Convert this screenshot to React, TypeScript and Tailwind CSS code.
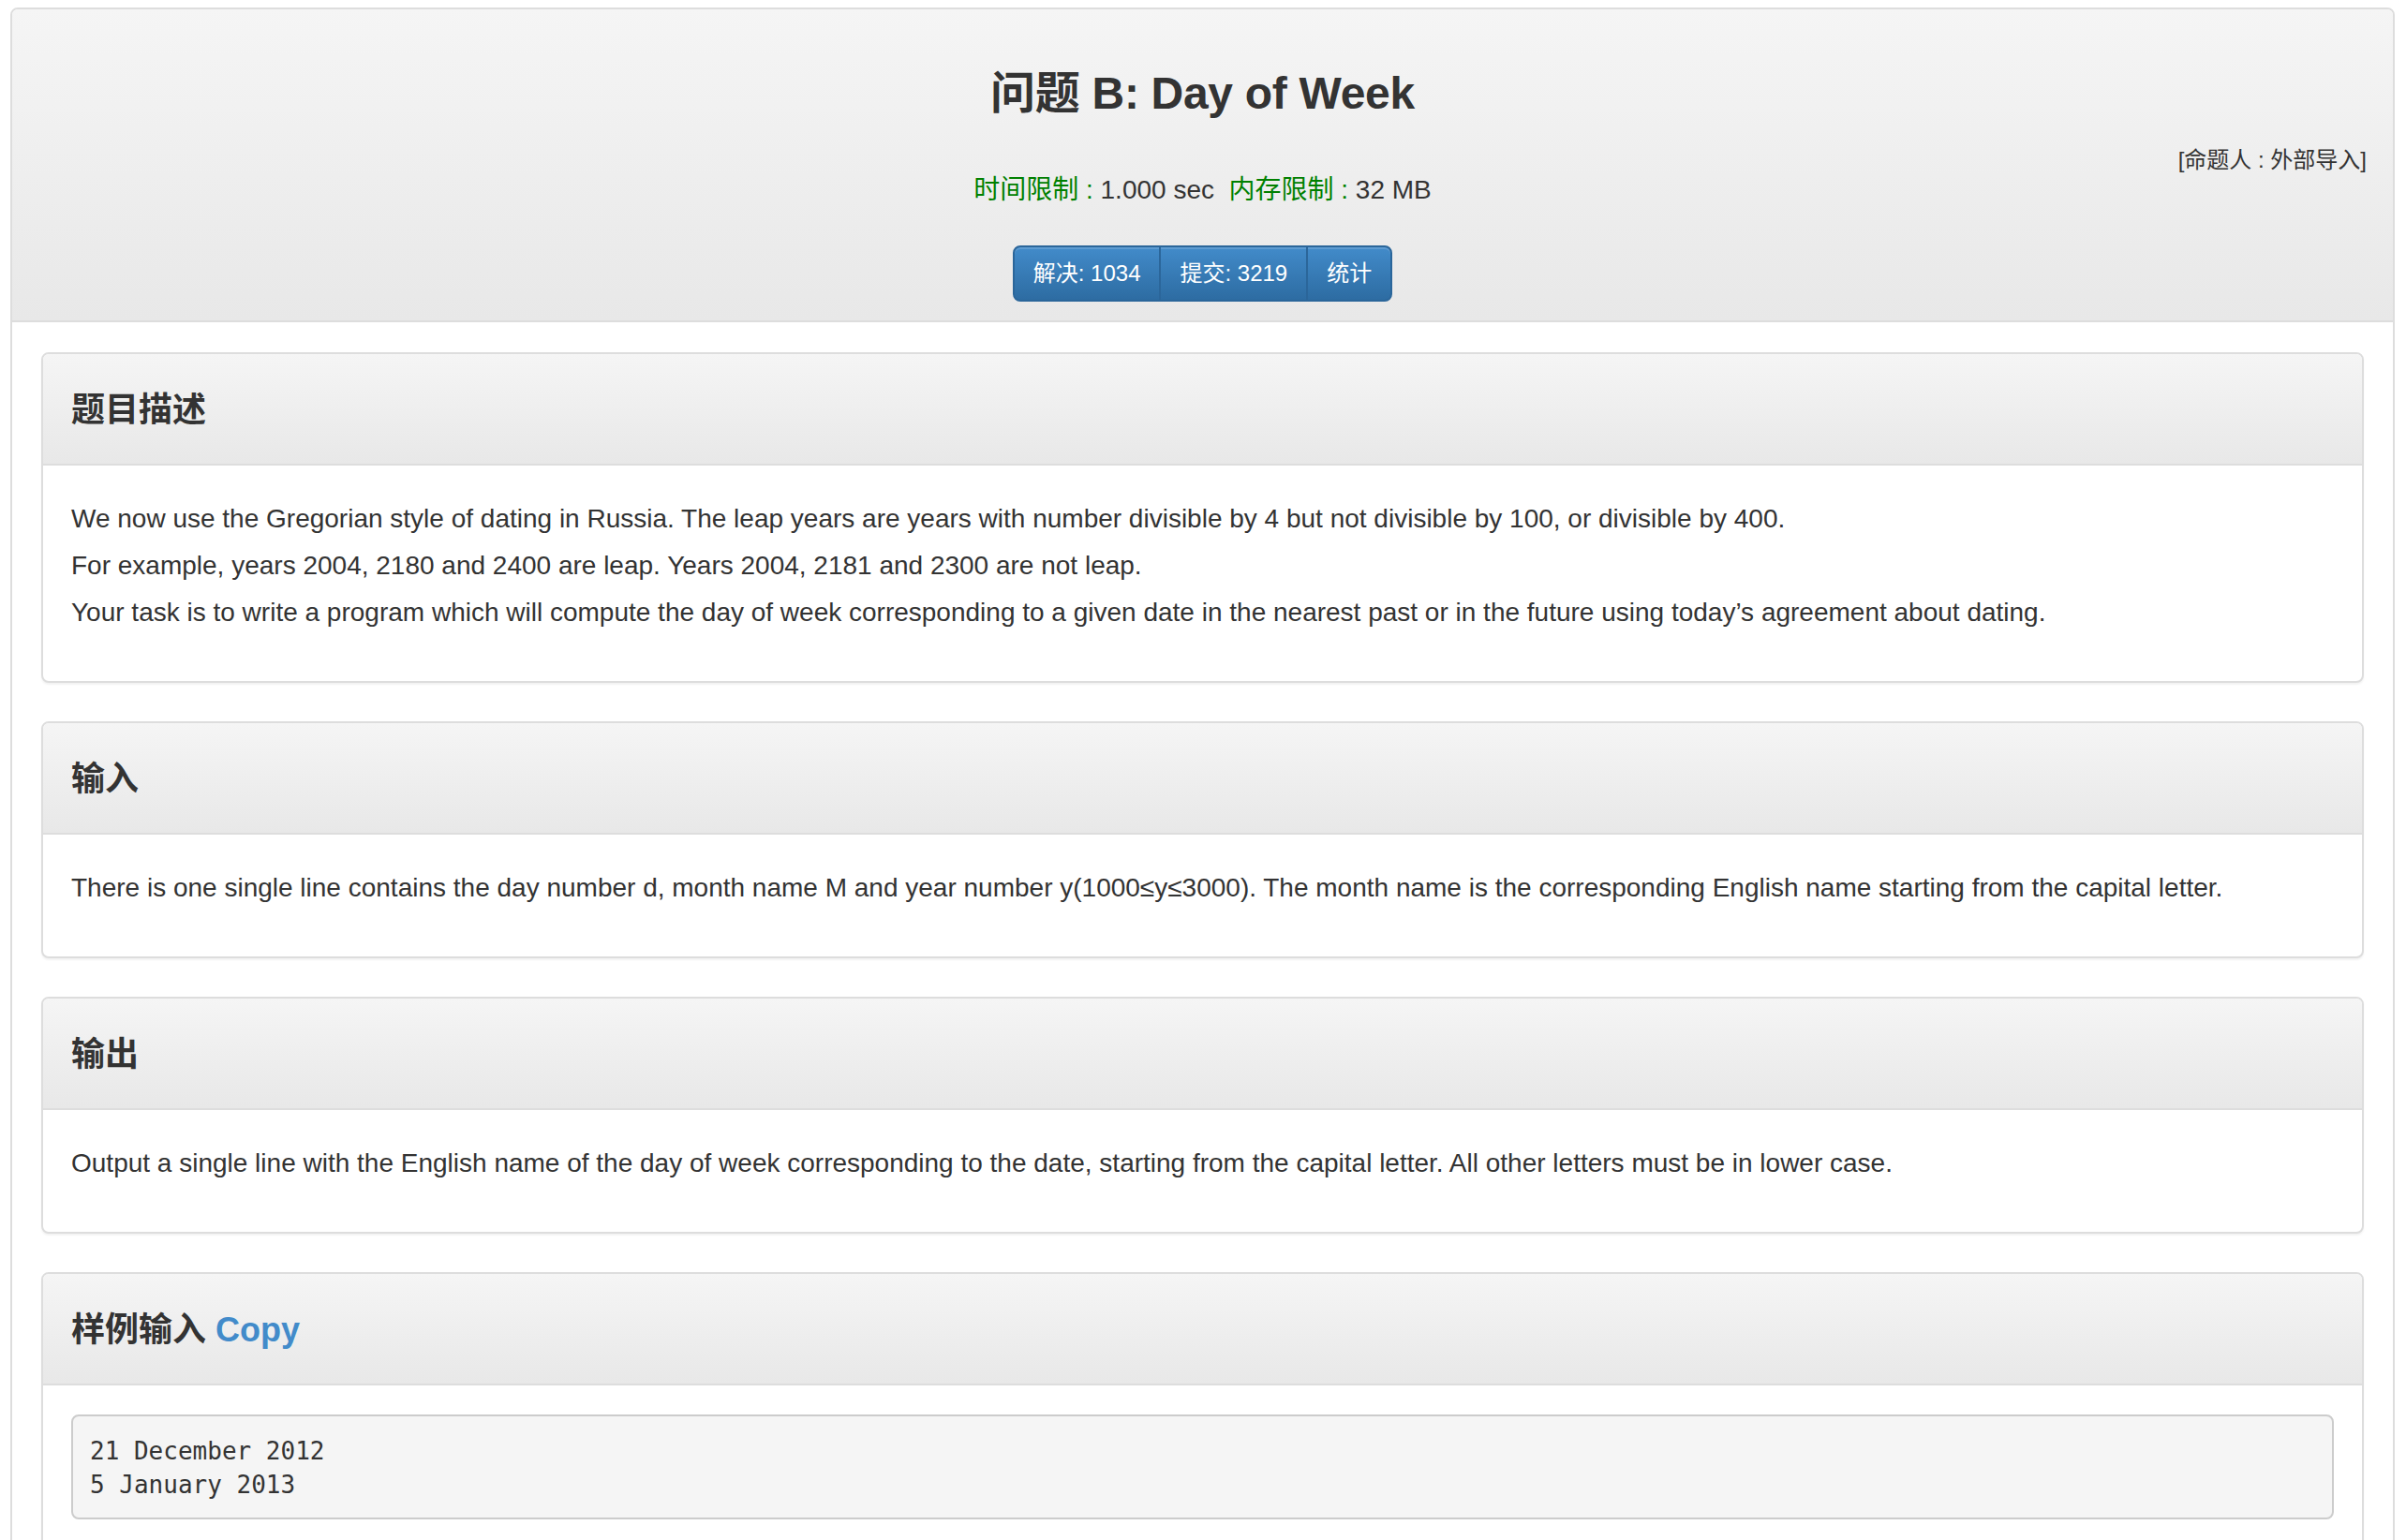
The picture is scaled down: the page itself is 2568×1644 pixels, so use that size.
import React from "react";

const sans = { fontFamily: '"Liberation Sans", Arial, "Noto Sans CJK SC", sans-serif' };

function Panel({ title, children, bodyClass }: { title: React.ReactNode; children: React.ReactNode; bodyClass?: string }) {
  return (
    <div className="mb-[41px] rounded-[8px] border-2 border-[#dddddd] bg-white shadow-[0_2px_2px_rgba(0,0,0,0.05)] overflow-hidden">
      <div className="box-border flex h-[119px] items-center border-b-2 border-[#dddddd] bg-linear-to-b from-[#f5f5f5] to-[#e8e8e8] px-[30px] pt-[3px]">
        <h4 className="text-[36px] leading-[40px] font-semibold text-[#333333]">{title}</h4>
      </div>
      <div className={bodyClass ?? "px-[30px] pt-[32px] pb-[48px] text-[28px] leading-[50px] text-[#333333]"}>{children}</div>
    </div>
  );
}

export default function App() {
  return (
    <div className="min-h-[1644px] bg-white pt-[8px] pl-[11px] pr-[12px]" style={sans}>
      <div className="rounded-[8px] border-2 border-[#dddddd] bg-white">
        <div className="grid grid-cols-[1fr_auto_1fr] rounded-t-[6px] border-b-2 border-[#dddddd] bg-linear-to-b from-[#f5f5f5] to-[#e8e8e8] pb-[20px]">
          <div />
          <div className="flex flex-col items-center pt-[63px]">
            <h3 className="text-[48px] leading-[53px] font-semibold tracking-[-0.3px] text-[#333333]">问题 B: Day of Week</h3>
            <div className="mt-[57px] text-[28px] leading-[40px] text-[#333333]">
              <span className="text-[#008000]">时间限制 : </span>1.000 sec&nbsp;&nbsp;
              <span className="text-[#008000]">内存限制 : </span>32 MB
            </div>
            <div className="mt-[39px] flex h-[60px] text-[24px] leading-[36px] text-white">
              <div className="flex items-center rounded-l-[8px] border-2 border-[#2b669a] bg-linear-to-b from-[#428bca] to-[#2d6ca2] px-[20px] shadow-[inset_0_2px_0_rgba(255,255,255,0.15)]">
                解决: 1034
              </div>
              <div className="-ml-[2px] flex items-center border-2 border-[#2b669a] bg-linear-to-b from-[#428bca] to-[#2d6ca2] px-[20px] shadow-[inset_0_2px_0_rgba(255,255,255,0.15)]">
                提交: 3219
              </div>
              <div className="-ml-[2px] flex items-center rounded-r-[8px] border-2 border-[#2b669a] bg-linear-to-b from-[#428bca] to-[#2d6ca2] px-[20px] shadow-[inset_0_2px_0_rgba(255,255,255,0.15)]">
                统计
              </div>
            </div>
          </div>
          <div className="flex justify-end pt-[144px] pr-[28px]">
            <span className="text-[24px] leading-[34px] text-[#333333]">[命题人 : 外部导入]</span>
          </div>
        </div>

        <div className="px-[31px] pt-[32px]">
          <Panel title="题目描述">
            <div>We now use the Gregorian style of dating in Russia. The leap years are years with number divisible by 4 but not divisible by 100, or divisible by 400.</div>
            <div>For example, years 2004, 2180 and 2400 are leap. Years 2004, 2181 and 2300 are not leap.</div>
            <div>Your task is to write a program which will compute the day of week corresponding to a given date in the nearest past or in the future using today’s agreement about dating.</div>
          </Panel>
          <Panel title="输入">
            <div>There is one single line contains the day number d, month name M and year number y(1000≤y≤3000). The month name is the corresponding English name starting from the capital letter.</div>
          </Panel>
          <Panel title="输出">
            <div>Output a single line with the English name of the day of week corresponding to the date, starting from the capital letter. All other letters must be in lower case.</div>
          </Panel>
          <Panel
            title={
              <>
                样例输入 <span className="font-semibold text-[#428bca]">Copy</span>
              </>
            }
            bodyClass="px-[30px] pt-[31px] pb-[30px]"
          >
            <pre
              className="rounded-[8px] border-2 border-[#cccccc] bg-[#f5f5f5] px-[18px] pt-[19px] pb-[17px] text-[26px] leading-[36px] text-[#333333]"
              style={{ fontFamily: '"DejaVu Sans Mono", "Liberation Mono", monospace' }}
            >
{`21 December 2012
5 January 2013`}
            </pre>
          </Panel>
        </div>
      </div>
    </div>
  );
}
